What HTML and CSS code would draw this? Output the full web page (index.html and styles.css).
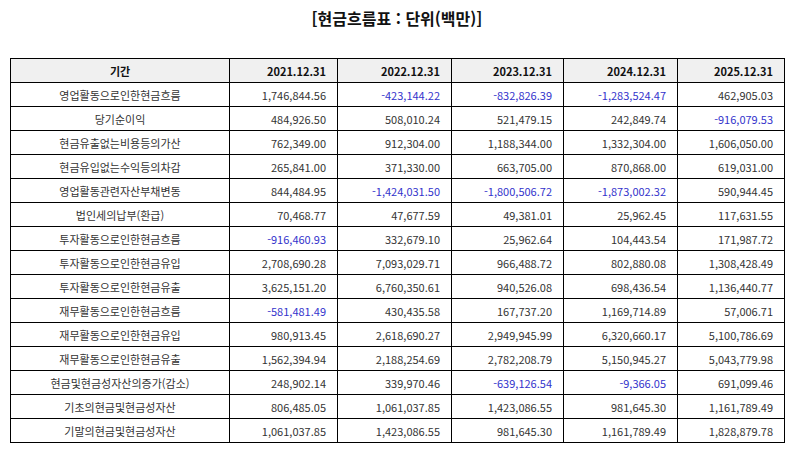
FILE: index.html
```html
<!DOCTYPE html>
<html lang="ko">
<head>
<meta charset="utf-8">
<title>현금흐름표</title>
<link rel="stylesheet" href="styles.css">
</head>
<body>
<div class="page">
  <h1 class="title">[현금흐름표 : 단위(백만)]</h1>
  <table class="cf">
    <colgroup>
      <col class="c-label"><col class="c1"><col class="c2"><col class="c3"><col class="c4"><col class="c5">
    </colgroup>
    <thead>
      <tr><th class="lbl">기간</th><th>2021.12.31</th><th>2022.12.31</th><th>2023.12.31</th><th>2024.12.31</th><th>2025.12.31</th></tr>
    </thead>
    <tbody>
      <tr><td class="lbl">영업활동으로인한현금흐름</td><td>1,746,844.56</td><td class="neg">-423,144.22</td><td class="neg">-832,826.39</td><td class="neg">-1,283,524.47</td><td>462,905.03</td></tr>
      <tr><td class="lbl">당기순이익</td><td>484,926.50</td><td>508,010.24</td><td>521,479.15</td><td>242,849.74</td><td class="neg">-916,079.53</td></tr>
      <tr><td class="lbl">현금유출없는비용등의가산</td><td>762,349.00</td><td>912,304.00</td><td>1,188,344.00</td><td>1,332,304.00</td><td>1,606,050.00</td></tr>
      <tr><td class="lbl">현금유입없는수익등의차감</td><td>265,841.00</td><td>371,330.00</td><td>663,705.00</td><td>870,868.00</td><td>619,031.00</td></tr>
      <tr><td class="lbl">영업활동관련자산부채변동</td><td>844,484.95</td><td class="neg">-1,424,031.50</td><td class="neg">-1,800,506.72</td><td class="neg">-1,873,002.32</td><td>590,944.45</td></tr>
      <tr><td class="lbl">법인세의납부(환급)</td><td>70,468.77</td><td>47,677.59</td><td>49,381.01</td><td>25,962.45</td><td>117,631.55</td></tr>
      <tr><td class="lbl">투자활동으로인한현금흐름</td><td class="neg">-916,460.93</td><td>332,679.10</td><td>25,962.64</td><td>104,443.54</td><td>171,987.72</td></tr>
      <tr><td class="lbl">투자활동으로인한현금유입</td><td>2,708,690.28</td><td>7,093,029.71</td><td>966,488.72</td><td>802,880.08</td><td>1,308,428.49</td></tr>
      <tr><td class="lbl">투자활동으로인한현금유출</td><td>3,625,151.20</td><td>6,760,350.61</td><td>940,526.08</td><td>698,436.54</td><td>1,136,440.77</td></tr>
      <tr><td class="lbl">재무활동으로인한현금흐름</td><td class="neg">-581,481.49</td><td>430,435.58</td><td>167,737.20</td><td>1,169,714.89</td><td>57,006.71</td></tr>
      <tr><td class="lbl">재무활동으로인한현금유입</td><td>980,913.45</td><td>2,618,690.27</td><td>2,949,945.99</td><td>6,320,660.17</td><td>5,100,786.69</td></tr>
      <tr><td class="lbl">재무활동으로인한현금유출</td><td>1,562,394.94</td><td>2,188,254.69</td><td>2,782,208.79</td><td>5,150,945.27</td><td>5,043,779.98</td></tr>
      <tr><td class="lbl">현금및현금성자산의증가(감소)</td><td>248,902.14</td><td>339,970.46</td><td class="neg">-639,126.54</td><td class="neg">-9,366.05</td><td>691,099.46</td></tr>
      <tr><td class="lbl">기초의현금및현금성자산</td><td>806,485.05</td><td>1,061,037.85</td><td>1,423,086.55</td><td>981,645.30</td><td>1,161,789.49</td></tr>
      <tr><td class="lbl">기말의현금및현금성자산</td><td>1,061,037.85</td><td>1,423,086.55</td><td>981,645.30</td><td>1,161,789.49</td><td>1,828,879.78</td></tr>
    </tbody>
  </table>
</div>
</body>
</html>
```

FILE: styles.css
```css
html, body {
  margin: 0;
  padding: 0;
  background: #ffffff;
}

.page {
  padding: 7px 10px 0 10px;
  font-family: "Noto Sans CJK KR", "Noto Sans", sans-serif;
  color: #222222;
}

.title {
  margin: 0;
  height: 22px;
  line-height: 22px;
  font-size: 16px;
  font-weight: bold;
  text-align: center;
  color: #111111;
}

.cf {
  margin-top: 29px;
  width: 774px;
  border-collapse: collapse;
  table-layout: fixed;
  font-size: 11px;
}

.c-label { width: 219px; }
.c1 { width: 108px; }
.c2 { width: 114px; }
.c3 { width: 112px; }
.c4 { width: 114px; }
.c5 { width: 107px; }

.cf th,
.cf td {
  border: 1px solid #000000;
  height: 24px;
  padding: 0 11px 0 4px;
  text-align: right;
  white-space: nowrap;
  box-sizing: border-box;
  line-height: 14px;
}

.cf th {
  background: #f0f0f0;
  font-weight: bold;
  color: #111111;
}

.cf td {
  color: #333333;
}

.cf .lbl {
  text-align: center;
  padding: 0 4px;
}

.cf td.neg {
  color: #3333cc;
}
```
